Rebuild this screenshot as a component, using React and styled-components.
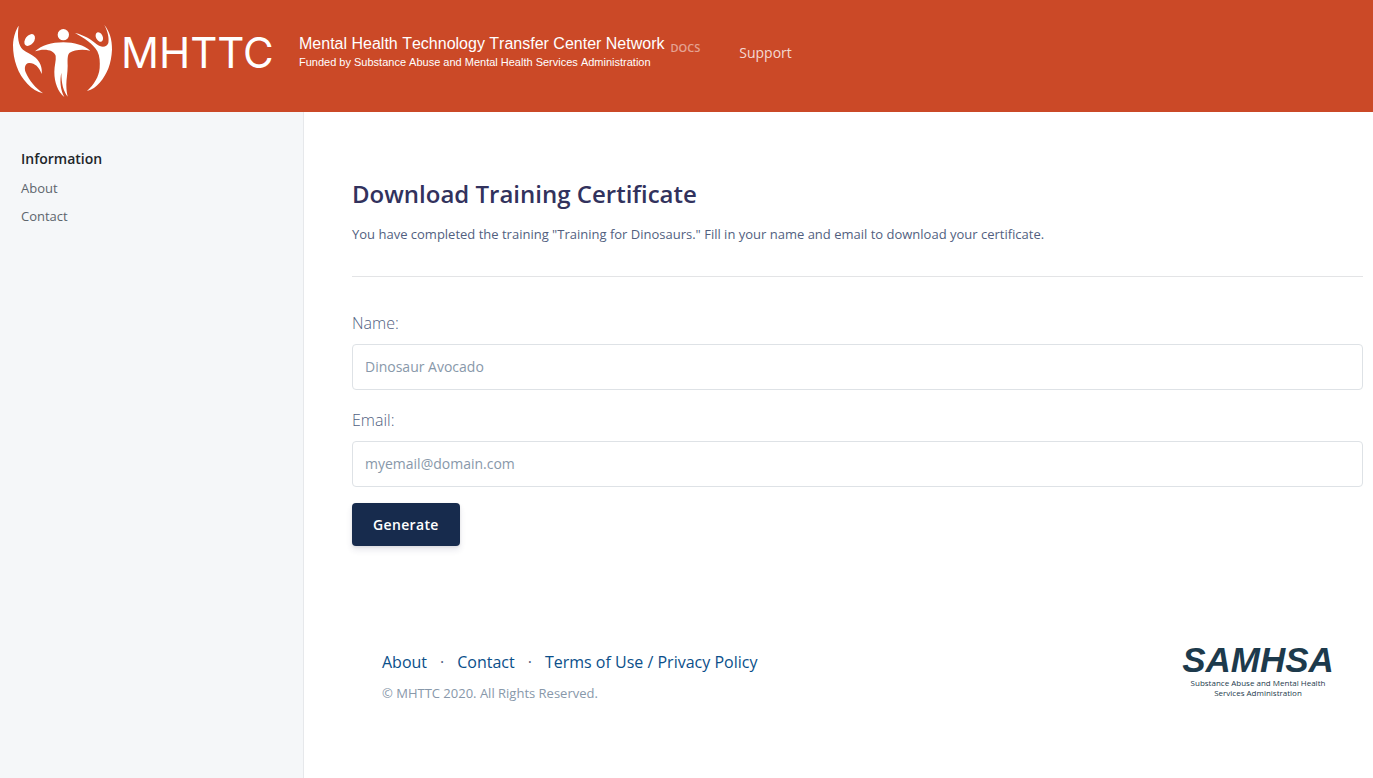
import React from "react";
import styled, { createGlobalStyle } from "styled-components";

const GlobalStyle = createGlobalStyle`
  *, *::before, *::after { box-sizing: border-box; }
  html { height: 100%; }
  body {
    margin: 0;
    min-height: 100%;
    background: #fff;
    color: #525f7f;
    font-family: "Open Sans", "Noto Sans", sans-serif;
    font-size: 16px;
    line-height: 24px;
  }
  a { text-decoration: none; }
`;

const Page = styled.div`
  display: flex;
  flex-direction: column;
  min-height: 100vh;
`;

const Header = styled.header`
  display: flex;
  align-items: flex-start;
  min-height: 112px;
  padding: 24px 12px 14px;
  background: #cb4927;
`;

const Brand = styled.a`
  display: flex;
  align-items: flex-start;
  color: #fff;
`;

const Figures = styled.svg`
  flex: none;
  width: 101px;
  height: 74px;
`;

const Acronym = styled.span`
  width: 176px;
  margin-left: 8px;
  padding-top: 5px;
  font-family: Inter, "Liberation Sans", sans-serif;
  font-size: 42px;
  line-height: 48px;
`;

const Network = styled.span`
  display: flex;
  flex-direction: column;
  margin-left: 2px;
  padding-top: 10px;
  font-family: "Liberation Sans", Arial, sans-serif;
  font-kerning: none;
  white-space: nowrap;
`;

const NetworkName = styled.span`
  font-size: 16px;
  line-height: 20px;
`;

const NetworkFunding = styled.span`
  font-size: 11px;
  line-height: 16px;
`;

const Docs = styled.span`
  margin-left: 6px;
  padding-top: 16px;
  font-size: 11px;
  line-height: 16px;
  font-weight: 600;
  color: rgba(255, 255, 255, 0.5);
`;

const HeaderNav = styled.nav`
  margin-left: 39px;
  padding-top: 16px;
`;

const HeaderLink = styled.a`
  font-size: 14px;
  color: rgba(255, 255, 255, 0.8);
`;

const Body = styled.div`
  display: flex;
  flex: 1;
`;

const Sidebar = styled.nav`
  flex: none;
  width: 304px;
  padding: 35px 21px;
  border-right: 1px solid #e6e8eb;
  background: #f5f7f9;
`;

const SidebarTitle = styled.h2`
  margin: 0 0 3px;
  font-size: 14px;
  line-height: 24px;
  font-weight: 600;
  color: #212529;
`;

const SidebarList = styled.ul`
  margin: 0;
  padding: 0;
  list-style: none;
`;

const SidebarLink = styled.a`
  display: block;
  padding: 4px 0;
  font-size: 13px;
  line-height: 20px;
  color: #5d656d;
`;

const Main = styled.main`
  flex: 1;
  min-width: 0;
  padding: 64px 10px 48px 48px;
`;

const Title = styled.h1`
  margin: 0;
  font-size: 24px;
  line-height: 36px;
  font-weight: 600;
  color: #32325d;
`;

const Lead = styled.p`
  margin: 12px 0 32px;
  font-size: 13px;
  line-height: 20px;
`;

const Rule = styled.hr`
  margin: 0 0 34px;
  border: 0;
  border-top: 1px solid #e3e4e6;
`;

const Field = styled.div`
  margin-bottom: ${(p) => (p.$last ? 16 : 18)}px;
`;

const Label = styled.label`
  display: block;
  margin-bottom: 9px;
  font-weight: 300;
`;

const Input = styled.input`
  display: block;
  width: 100%;
  height: 46px;
  padding: 9px 12px 11px;
  border: 1px solid #dee2e6;
  border-radius: 4px;
  background: #fff;
  color: #525f7f;
  font: inherit;
  font-size: 14px;
  &::placeholder { color: #8898aa; opacity: 1; }
`;

const Button = styled.button`
  height: 43px;
  padding: 0 21px;
  border: 0;
  border-radius: 4px;
  background: #172b4d;
  color: #fff;
  font: inherit;
  font-size: 14px;
  font-weight: 600;
  letter-spacing: 0.025em;
  box-shadow: 0 4px 6px rgba(50, 50, 93, 0.11), 0 1px 3px rgba(0, 0, 0, 0.08);
`;

const Footer = styled.footer`
  display: flex;
  justify-content: space-between;
  margin-top: 96px;
  padding: 0 30px;
`;

const FooterLinks = styled.div`
  display: flex;
  gap: 13px;
  padding-top: 8px;
`;

const FooterLink = styled.a`
  color: #0b4f8a;
`;

const Copyright = styled.p`
  margin: 9px 0 0;
  font-size: 13px;
  line-height: 20px;
  color: #8898aa;
`;

const Agency = styled.a`
  display: flex;
  flex-direction: column;
  align-items: center;
  width: 150px;
  color: #1d3a4c;
  white-space: nowrap;
`;

const AgencyMark = styled.span`
  font-family: "Liberation Sans", Arial, sans-serif;
  font-size: 35px;
  line-height: 36px;
  font-weight: 700;
  font-style: italic;
`;

const AgencyName = styled.span`
  font-size: 8px;
  line-height: 10px;
`;

const PeopleLogo = () => (
  <Figures viewBox="36 42 303 222" fill="#fff" aria-hidden="true">
    <path d="M56 47C48 58 40 80 39 105C39 150 54 192 82 221C96 236 112 246 129 250C108 236 87 211 77 187C72 174 75 160 87 159C103 158 117 170 125 192C128 172 119 154 107 143C95 132 80 128 69 119C55 106 51 80 56 47Z" />
    <ellipse cx="89" cy="90" rx="13" ry="20" transform="rotate(38 89 90)" />
    <circle cx="190" cy="74" r="17" />
    <path d="M105 124C125 106 155 97 190 97C223 97 252 106 271 122C249 116 222 119 209 128C201 135 203 153 203 167C203 189 199 208 199 224C199 240 201 251 203 260C190 243 184 220 184 188C179 211 181 239 193 261C174 246 163 218 163 186C163 167 169 151 167 137C162 119 132 114 105 124Z" />
    <path d="M313 45C328 62 337 90 336 119C334 160 322 192 299 218C289 230 276 239 261 243C282 224 297 200 299 174C300 157 300 140 292 124C279 101 253 84 225 69C252 75 273 88 290 103C304 114 321 112 325 99C328 84 323 63 313 45Z" />
    <ellipse cx="298" cy="81" rx="10" ry="15" transform="rotate(-27 298 81)" />
  </Figures>
);

export default function App() {
  return (
    <Page>
      <GlobalStyle />
      <Header>
        <Brand href="#">
          <PeopleLogo />
          <Acronym>MHTTC</Acronym>
          <Network>
            <NetworkName>Mental Health Technology Transfer Center Network</NetworkName>
            <NetworkFunding>
              Funded by Substance Abuse and Mental Health Services Administration
            </NetworkFunding>
          </Network>
          <Docs>DOCS</Docs>
        </Brand>
        <HeaderNav>
          <HeaderLink href="#support">Support</HeaderLink>
        </HeaderNav>
      </Header>
      <Body>
        <Sidebar>
          <SidebarTitle>Information</SidebarTitle>
          <SidebarList>
            <li><SidebarLink href="#about">About</SidebarLink></li>
            <li><SidebarLink href="#contact">Contact</SidebarLink></li>
          </SidebarList>
        </Sidebar>
        <Main>
          <Title>Download Training Certificate</Title>
          <Lead>
            You have completed the training "Training for Dinosaurs." Fill in your name and email
            to download your certificate.
          </Lead>
          <Rule />
          <form onSubmit={(e) => e.preventDefault()}>
            <Field>
              <Label htmlFor="name">Name:</Label>
              <Input id="name" type="text" placeholder="Dinosaur Avocado" />
            </Field>
            <Field $last>
              <Label htmlFor="email">Email:</Label>
              <Input id="email" type="email" placeholder="myemail@domain.com" />
            </Field>
            <Button type="submit">Generate</Button>
          </form>
          <Footer>
            <div>
              <FooterLinks>
                <FooterLink href="#about">About</FooterLink>
                <span>·</span>
                <FooterLink href="#contact">Contact</FooterLink>
                <span>·</span>
                <FooterLink href="#terms">Terms of Use / Privacy Policy</FooterLink>
              </FooterLinks>
              <Copyright>© MHTTC 2020. All Rights Reserved.</Copyright>
            </div>
            <Agency href="#samhsa">
              <AgencyMark>SAMHSA</AgencyMark>
              <AgencyName>Substance Abuse and Mental Health</AgencyName>
              <AgencyName>Services Administration</AgencyName>
            </Agency>
          </Footer>
        </Main>
      </Body>
    </Page>
  );
}
